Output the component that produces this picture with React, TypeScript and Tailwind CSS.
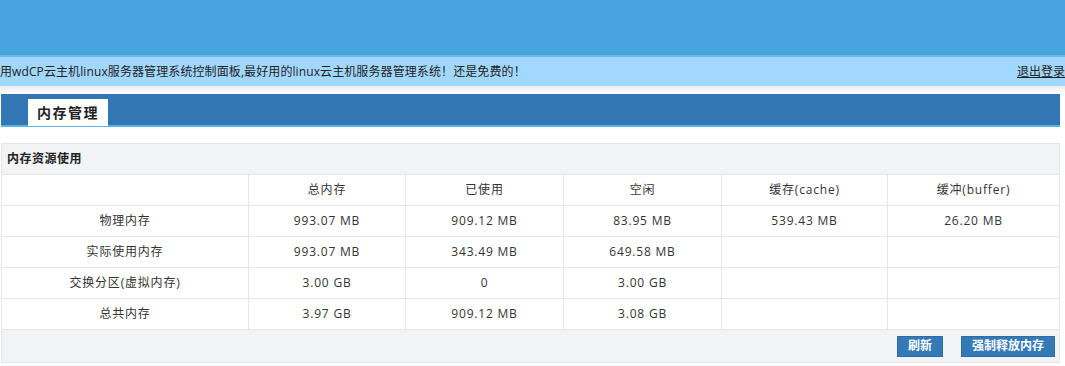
const rows = [
  ["物理内存", "993.07 MB", "909.12 MB", "83.95 MB", "539.43 MB", "26.20 MB"],
  ["实际使用内存", "993.07 MB", "343.49 MB", "649.58 MB", "", ""],
  ["交换分区(虚拟内存)", "3.00 GB", "0", "3.00 GB", "", ""],
  ["总共内存", "3.97 GB", "909.12 MB", "3.08 GB", "", ""],
]

const head = ["", "总内存", "已使用", "空闲", "缓存(cache)", "缓冲(buffer)"]

const font = "font-['Open_Sans','Noto_Sans_CJK_SC',sans-serif]"

export default function App() {
  return (
    <div className={`w-[1065px] h-[366px] overflow-hidden bg-white text-[#333] ${font}`}>
      <div className="h-[55px] bg-[#48a4de]" />
      <div className="h-[2px] bg-[#6db6ea]" />
      <div className="h-[29px] bg-[#a3d8fe] flex items-center justify-between text-[12px] text-[#222]">
        <span className="whitespace-nowrap tracking-[0.1px]">用wdCP云主机linux服务器管理系统控制面板,最好用的linux云主机服务器管理系统！还是免费的！</span>
        <a className="underline whitespace-nowrap" href="#">退出登录</a>
      </div>
      <div className="h-[8px] bg-gradient-to-b from-[#ececec] to-white" />

      <div className="ml-[1px] w-[1059px] h-[33px] bg-[#3277b4] border-b-2 border-[#5ab4df] flex items-end pl-[27px]">
        <div className="h-[27px] w-[80px] bg-white mb-[-1px] flex items-center justify-center text-[14px] font-bold tracking-[1.5px] text-[#222]">
          内存管理
        </div>
      </div>

      <div className="mt-[16px] ml-[1px] w-[1059px] border border-[#e3e6ea]">
        <div className="h-[31px] bg-[#f2f3f5] border-b border-[#e3e6ea] flex items-center pl-[5px] text-[12px] font-bold tracking-[0.5px] text-[#222]">
          内存资源使用
        </div>
        {[head, ...rows].map((row, i) => (
          <div key={i} className="grid grid-cols-[247px_157px_158px_158px_166px_1fr] h-[31px] border-b border-[#e3e6ea] text-[12px] tracking-[0.8px]">
            {row.map((cell, j) => (
              <div key={j} className={`flex items-center justify-center ${j < 5 ? "border-r border-[#e3e6ea]" : ""}`}>
                {cell}
              </div>
            ))}
          </div>
        ))}
        <div className="h-[32px] bg-[#f2f3f5] flex items-center justify-end gap-[18px] pr-[4px]">
          <button className="h-[21px] w-[46px] bg-[#337ab7] border border-[#2e6da4] text-white text-[12px] font-bold">刷新</button>
          <button className="h-[21px] w-[94px] bg-[#337ab7] border border-[#2e6da4] text-white text-[12px] font-bold">强制释放内存</button>
        </div>
      </div>
    </div>
  )
}
